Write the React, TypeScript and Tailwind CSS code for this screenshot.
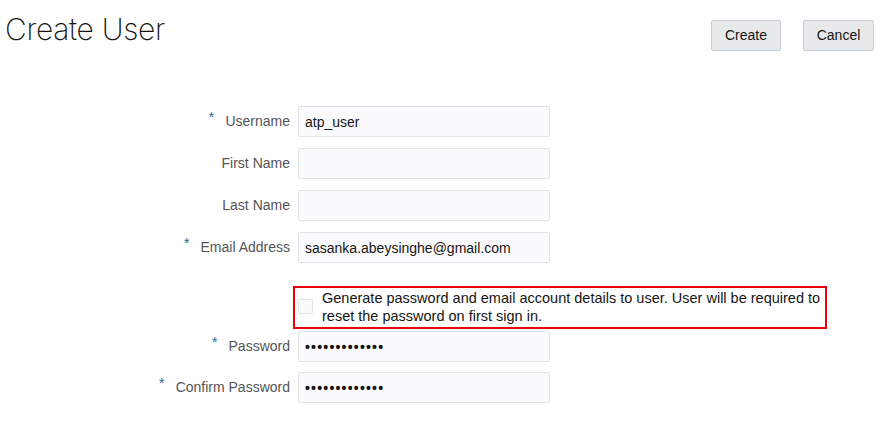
import { useState } from "react";

const fields = [
  { label: "Username", required: true, value: "atp_user" },
  { label: "First Name", required: false, value: "" },
  { label: "Last Name", required: false, value: "" },
  { label: "Email Address", required: true, value: "sasanka.abeysinghe@gmail.com" },
];

function Row({ label, required, children }: { label: string; required?: boolean; children: React.ReactNode }) {
  return (
    <div className="flex items-center">
      <div className="w-[290px] flex justify-end items-center text-[14px] text-[#555]">
        {required && <span className="text-[#2d6ca0] text-[15px] mr-[11px] -mt-[8px]">*</span>}
        <span>{label}</span>
      </div>
      <div className="ml-2">{children}</div>
    </div>
  );
}

function Field({ value, type = "text" }: { value: string; type?: string }) {
  const [v, setV] = useState(value);
  return (
    <input
      type={type}
      value={v}
      onChange={(e) => setV(e.target.value)}
      className={
        "w-[252px] h-[31px] px-[6px] bg-[#fbfbfd] border border-[#dfe4e4] rounded-[2px] text-[14px] text-[#161513] outline-none " +
        (type === "password" ? "tracking-[1.2px] font-bold" : "")
      }
    />
  );
}

export default function App() {
  const [generate, setGenerate] = useState(false);

  return (
    <div className="w-[885px] h-[425px] bg-white font-['Liberation_Sans',Arial,sans-serif] text-[#161513]">
      <div className="flex justify-between">
        <h1 className="pl-[5px] pt-[7px] text-[30px] font-[200] tracking-[-0.3px] text-[#161513] font-['Inter',sans-serif]">
          Create User
        </h1>
        <div className="flex gap-[22px] pt-[20px] pr-[11px]">
          <button className="w-[70px] h-[31px] bg-[#e8e9ea] border border-[#c4ced7] rounded-[2px] text-[14px] text-[#161513]">
            Create
          </button>
          <button className="w-[71px] h-[31px] bg-[#e8e9ea] border border-[#c4ced7] rounded-[2px] text-[14px] text-[#161513]">
            Cancel
          </button>
        </div>
      </div>

      <div className="mt-[54px] flex flex-col gap-[11px]">
        {fields.map((f) => (
          <Row key={f.label} label={f.label} required={f.required}>
            <Field value={f.value} />
          </Row>
        ))}
      </div>

      <div className="mt-[23px] flex">
        <div className="w-[293px]" />
        <label className="w-[534px] h-[43px] border-2 border-[#e8000b] flex items-start pl-[3px] pt-[1px] cursor-pointer">
          <input
            type="checkbox"
            checked={generate}
            onChange={(e) => setGenerate(e.target.checked)}
            className="appearance-none mt-[10px] w-[15px] h-[15px] shrink-0 bg-[#fbfbfd] border border-[#dfe4e4] rounded-[2px] checked:bg-[#2d6ca0]"
          />
          <span className="ml-[9px] text-[14.5px] leading-[18px] text-[#161513]">
            Generate password and email account details to user. User will be required to reset the password on first sign in.
          </span>
        </label>
      </div>

      <div className="mt-[2px] flex flex-col gap-[10px]">
        <Row label="Password" required>
          <Field value="sasanka123456" type="password" />
        </Row>
        <Row label="Confirm Password" required>
          <Field value="sasanka123456" type="password" />
        </Row>
      </div>
    </div>
  );
}
